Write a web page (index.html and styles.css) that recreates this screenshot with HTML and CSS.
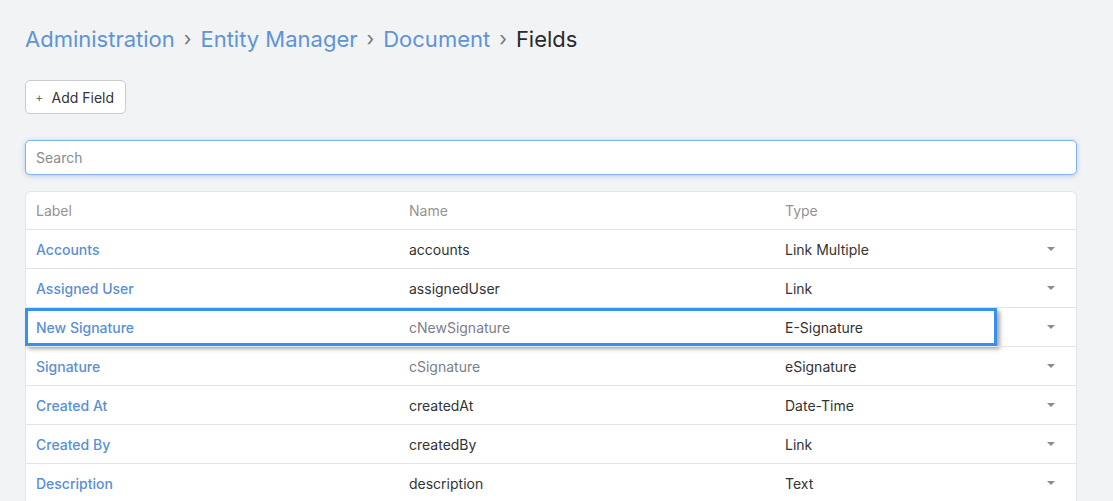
FILE: index.html
```html
<!DOCTYPE html>
<html>
<head>
<meta charset="utf-8">
<link rel="stylesheet" href="styles.css">
</head>
<body>
<div class="page">
  <div class="breadcrumb">
    <a class="crumb">Administration</a><span class="sep">›</span>
    <a class="crumb">Entity Manager</a><span class="sep">›</span>
    <a class="crumb">Document</a><span class="sep">›</span>
    <span class="current">Fields</span>
  </div>
  <div class="actions">
    <button class="btn"><span class="plus">+</span>Add Field</button>
  </div>
  <input class="search" type="text" placeholder="Search">
  <div class="table">
    <div class="row head">
      <div class="cell">Label</div><div class="cell">Name</div><div class="cell">Type</div><div class="cell"></div>
    </div>
    <div class="row">
      <div class="cell link">Accounts</div><div class="cell">accounts</div><div class="cell">Link Multiple</div><div class="cell caret"><span class="tri"></span></div>
    </div>
    <div class="row">
      <div class="cell link">Assigned User</div><div class="cell">assignedUser</div><div class="cell">Link</div><div class="cell caret"><span class="tri"></span></div>
    </div>
    <div class="row marked">
      <div class="cell link">New Signature</div><div class="cell custom">cNewSignature</div><div class="cell">E-Signature</div><div class="cell caret"><span class="tri"></span></div>
      <div class="highlight"></div>
    </div>
    <div class="row">
      <div class="cell link">Signature</div><div class="cell custom">cSignature</div><div class="cell">eSignature</div><div class="cell caret"><span class="tri"></span></div>
    </div>
    <div class="row">
      <div class="cell link">Created At</div><div class="cell">createdAt</div><div class="cell">Date-Time</div><div class="cell caret"><span class="tri"></span></div>
    </div>
    <div class="row">
      <div class="cell link">Created By</div><div class="cell">createdBy</div><div class="cell">Link</div><div class="cell caret"><span class="tri"></span></div>
    </div>
    <div class="row">
      <div class="cell link">Description</div><div class="cell">description</div><div class="cell">Text</div><div class="cell caret"><span class="tri"></span></div>
    </div>
  </div>
</div>
</body>
</html>
```
FILE: styles.css
```css
* { box-sizing: border-box; }
html, body { margin: 0; padding: 0; }
body {
  background: #f2f3f5;
  font-family: Inter, "Noto Sans", sans-serif;
  color: #333;
  font-size: 14px;
  overflow: hidden;
}
.page {
  padding: 24px 36px 0 25px;
}
.breadcrumb {
  display: flex;
  align-items: center;
  font-size: 22px;
  line-height: 30px;
  height: 30px;
}
.crumb { color: #5f94d6; }
.sep {
  color: #777;
  font-size: 20px;
  margin: 0 9px;
}
.current { color: #2b2b2b; }
.actions { margin-top: 26px; }
.btn {
  display: inline-flex;
  align-items: center;
  height: 34px;
  padding: 0 11px 0 9px;
  background: #fff;
  border: 1px solid #c8cbd0;
  border-radius: 5px;
  font-family: Inter, sans-serif;
  font-size: 14px;
  color: #333;
}
.plus {
  font-size: 13px;
  color: #555;
  margin-right: 8px;
  font-weight: 300;
}
.search {
  display: block;
  width: 100%;
  height: 35px;
  margin-top: 26px;
  border: 1px solid #7fb0e6;
  border-radius: 5px;
  background: #fff;
  padding: 0 10px;
  font-family: Inter, sans-serif;
  font-size: 14px;
  box-shadow: 0 1px 5px rgba(100, 160, 225, 0.45);
  outline: none;
}
.search::placeholder { color: #8a8a8a; }
.table {
  margin-top: 16px;
  background: #fff;
  border: 1px solid #e3e5e8;
  border-radius: 6px 6px 0 0;
}
.row {
  position: relative;
  display: grid;
  grid-template-columns: 373px 376px 1fr 50px;
  height: 39px;
  align-items: center;
  border-top: 1px solid #e2e4e7;
  padding-left: 10px;
}
.row.head { border-top: none; height: 37px; }
.head .cell { color: #949494; }
.cell { white-space: nowrap; }
.link { color: #5a8fd3; font-weight: 500; }
.custom { color: #7d7d88; }
.caret { display: flex; justify-content: center; }
.tri {
  width: 0; height: 0;
  border-left: 4px solid transparent;
  border-right: 4px solid transparent;
  border-top: 4px solid #8c8c8c;
}
.highlight {
  position: absolute;
  left: -1px;
  top: 0;
  width: 972px;
  height: 38px;
  border: 3px solid #3591ef;
  box-shadow: 3px 3px 4px rgba(0, 0, 0, 0.35);
  pointer-events: none;
}
```
